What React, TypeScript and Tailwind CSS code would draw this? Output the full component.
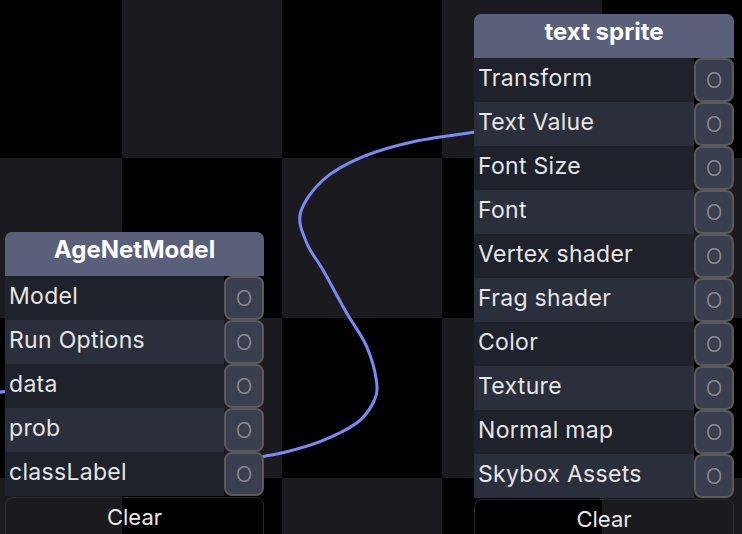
import React from "react";

type NodeProps = {
  title: string;
  inputs: string[];
  className: string;
};

// traced points of the link wire, turned into a smooth path
const wirePoints: [number, number][] = [
  [236, 463],
  [263, 456.5],
  [284, 452.5],
  [320, 441.7],
  [356.7, 423],
  [373, 403],
  [376.7, 383],
  [366.7, 346.7],
  [346.7, 313],
  [323, 270],
  [306.7, 243],
  [300.5, 213],
  [323, 180],
  [363, 156.7],
  [413.3, 141.7],
  [474, 132.3],
  [500, 130],
];

function toPath(pts: [number, number][]) {
  let d = `M ${pts[0][0]} ${pts[0][1]}`;
  for (let i = 0; i < pts.length - 1; i++) {
    const p0 = pts[i - 1] || pts[i];
    const p1 = pts[i];
    const p2 = pts[i + 1];
    const p3 = pts[i + 2] || p2;
    const c1x = p1[0] + (p2[0] - p0[0]) / 6;
    const c1y = p1[1] + (p2[1] - p0[1]) / 6;
    const c2x = p2[0] - (p3[0] - p1[0]) / 6;
    const c2y = p2[1] - (p3[1] - p1[1]) / 6;
    d += ` C ${c1x} ${c1y}, ${c2x} ${c2y}, ${p2[0]} ${p2[1]}`;
  }
  return d;
}

function GraphNode({ title, inputs, className }: NodeProps) {
  return (
    <div className={`absolute ${className}`}>
      <div className="flex h-[44px] items-center justify-center rounded-t-[7px] bg-[#5a6079] pb-[8px] text-[24px] font-bold text-white">
        {title}
      </div>
      {inputs.map((label, i) => (
        <div key={label} className="flex h-[44px]">
          <div
            className={`flex flex-1 items-center pb-[4px] pl-[4px] text-[23px] tracking-[0.3px] text-[#e6e6e8] ${
              i % 2 === 0 ? "bg-[#1f212b]" : "bg-[#2b2f3b]"
            }`}
          >
            {label}
          </div>
          <div className="flex w-[40px] items-center justify-center rounded-[8px] border-2 border-[#5a5a5c] bg-[#3a3f4f] text-[22px] font-light text-[#8c8c8f]">
            O
          </div>
        </div>
      ))}
      <button className="mt-px flex h-[40px] w-full items-center justify-center rounded-t-[8px] border border-[#2a2a2e] text-[22px] text-[#e8e8ea]">
        Clear
      </button>
    </div>
  );
}

export default function App() {
  return (
    <div className="relative h-[534px] w-[742px] overflow-hidden bg-black bg-[image:repeating-conic-gradient(#1a1a1f_0_25%,#000_0_50%)] bg-[length:320px_320px] bg-[position:-38px_-2px] font-['Inter',sans-serif]">
      <svg className="absolute inset-0" width="742" height="534">
        <path
          d={toPath(wirePoints)}
          fill="none"
          stroke="#7a8af2"
          strokeWidth="3"
        />
        <path d="M -20 394 L 12 391" fill="none" stroke="#7a8af2" strokeWidth="3" />
      </svg>

      <GraphNode
        title="AgeNetModel"
        inputs={["Model", "Run Options", "data", "prob", "classLabel"]}
        className="left-[5px] top-[232px] w-[259px]"
      />
      <GraphNode
        title="text sprite"
        inputs={[
          "Transform",
          "Text Value",
          "Font Size",
          "Font",
          "Vertex shader",
          "Frag shader",
          "Color",
          "Texture",
          "Normal map",
          "Skybox Assets",
        ]}
        className="left-[474px] top-[14px] w-[260px]"
      />
    </div>
  );
}
